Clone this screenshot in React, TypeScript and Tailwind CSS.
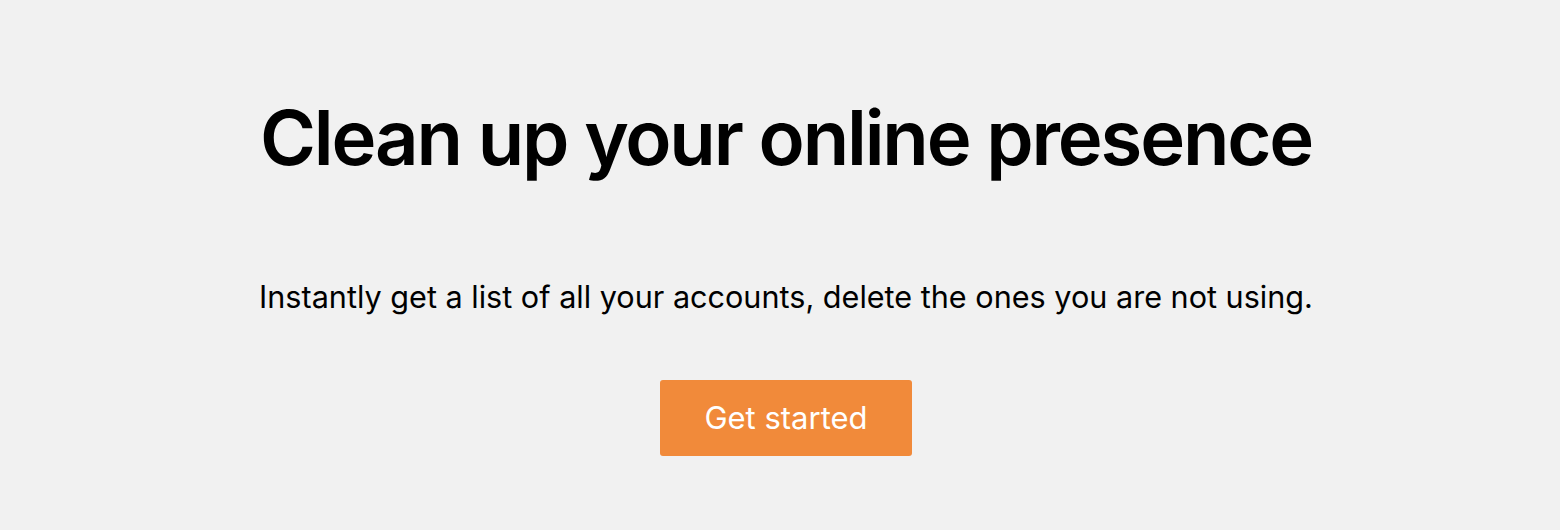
export default function App() {
  return (
    <div className="w-[1560px] h-[530px] bg-[#f1f1f1] pl-[12px] flex flex-col items-center text-black" style={{ fontFamily: 'Inter, "Noto Sans", sans-serif' }}>
      <h1 className="mt-[89px] text-[76px] leading-[96px] font-semibold tracking-[-2.2px]">Clean up your online presence</h1>
      <p className="mt-[92px] text-[30.6px] leading-[40px]">Instantly get a list of all your accounts, delete the ones you are not using.</p>
      <button className="mt-[63px] w-[252px] h-[76px] rounded-[3px] bg-[#f18a3a] text-white text-[31px]">Get started</button>
    </div>
  );
}
